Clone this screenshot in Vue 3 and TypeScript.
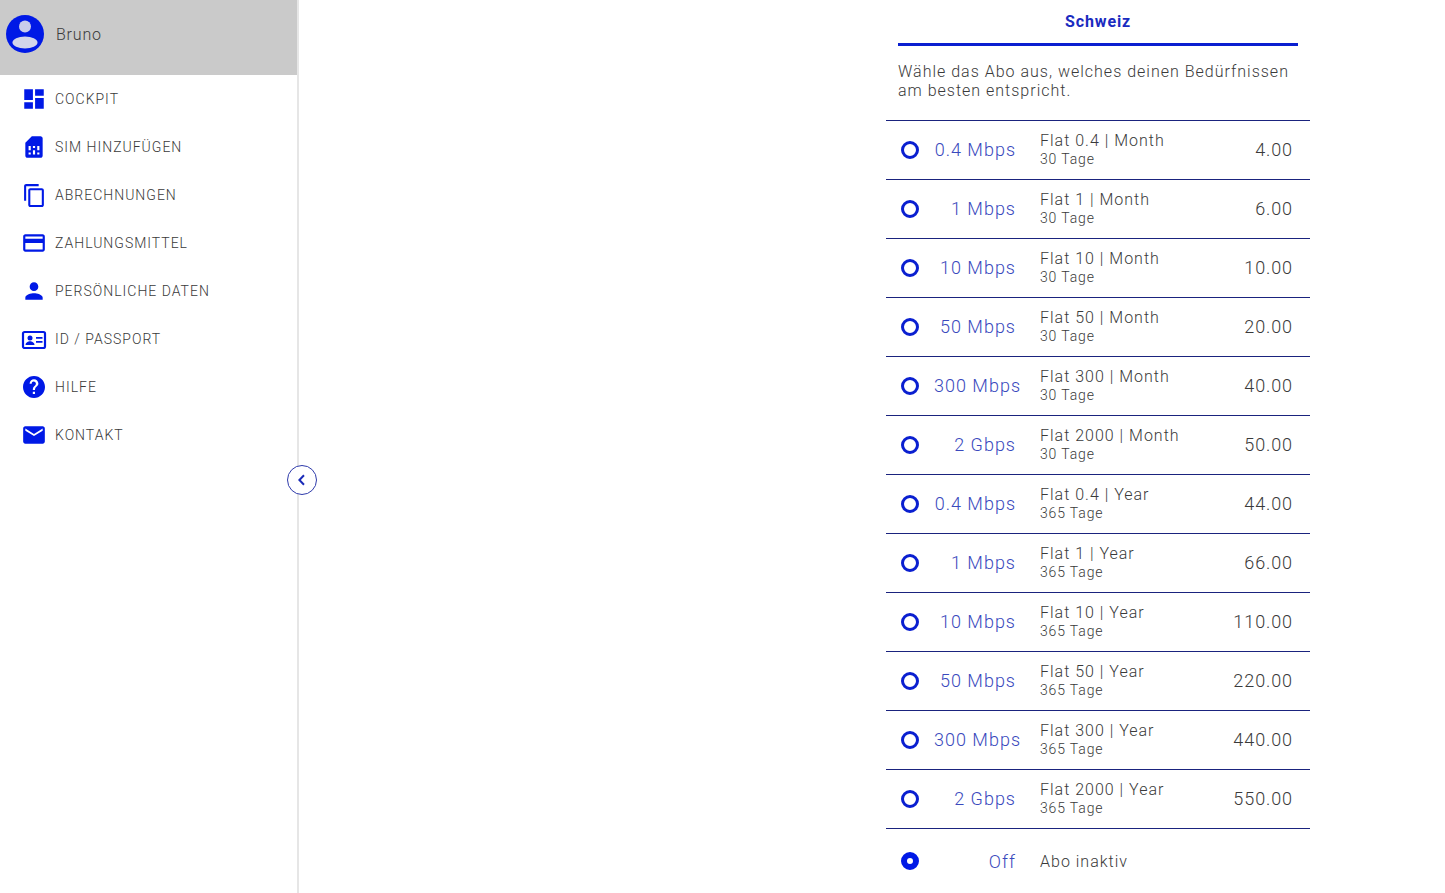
<script setup lang="ts">
interface Plan {
  speed: string
  name: string
  days: string
  price: string
}

const navItems = [
  { label: 'Cockpit', icon: 'dashboard' },
  { label: 'SIM hinzufügen', icon: 'sim' },
  { label: 'Abrechnungen', icon: 'copy' },
  { label: 'Zahlungsmittel', icon: 'card' },
  { label: 'Persönliche Daten', icon: 'person' },
  { label: 'ID / Passport', icon: 'id' },
  { label: 'Hilfe', icon: 'help' },
  { label: 'Kontakt', icon: 'mail' },
]

const tiers = [
  ['0.4 Mbps', '0.4'],
  ['1 Mbps', '1'],
  ['10 Mbps', '10'],
  ['50 Mbps', '50'],
  ['300 Mbps', '300'],
  ['2 Gbps', '2000'],
]
const monthPrices = ['4.00', '6.00', '10.00', '20.00', '40.00', '50.00']
const yearPrices = ['44.00', '66.00', '110.00', '220.00', '440.00', '550.00']

const plans: Plan[] = [
  ...tiers.map(([speed, flat], i) => ({
    speed,
    name: `Flat ${flat} | Month`,
    days: '30 Tage',
    price: monthPrices[i],
  })),
  ...tiers.map(([speed, flat], i) => ({
    speed,
    name: `Flat ${flat} | Year`,
    days: '365 Tage',
    price: yearPrices[i],
  })),
]
</script>

<template>
  <div class="page">
    <aside class="sidebar">
      <div class="user">
        <svg class="avatar" viewBox="0 0 40 40">
          <circle cx="20" cy="20" r="19" fill="#0019e6" />
          <circle cx="20" cy="12.500" r="6" fill="#c9cceb" />
          <ellipse cx="20" cy="28.500" rx="12.500" ry="6" fill="#d3d5ea" />
        </svg>
        <span class="user__name">Bruno</span>
      </div>
      <nav class="nav">
        <a v-for="item in navItems" :key="item.label" class="nav__item">
          <span class="nav__icon">
            <svg v-if="item.icon === 'dashboard'" width="26" height="26" viewBox="0 0 24 24">
              <path d="M3 13h8V3H3v10zm0 8h8v-6H3v6zm10 0h8V11h-8v10zm0-18v6h8V3h-8z" />
            </svg>
            <svg v-else-if="item.icon === 'sim'" width="26" height="26" viewBox="0 0 24 24">
              <path d="M19.99 4c0-1.1-.89-2-1.99-2h-8L4 8v12c0 1.1.9 2 2 2h12c1.1 0 2-.9 2-2l-.01-16zM9 19H7v-2h2v2zm8 0h-2v-2h2v2zm-8-4H7v-4h2v4zm4 4h-2v-4h2v4zm0-6h-2v-2h2v2zm4 2h-2v-4h2v4z" />
            </svg>
            <svg v-else-if="item.icon === 'copy'" width="25" height="25" viewBox="0 0 24 24">
              <path d="M16 1H4c-1.1 0-2 .9-2 2v14h2V3h12V1zm3 4H8c-1.1 0-2 .9-2 2v14c0 1.1.9 2 2 2h11c1.1 0 2-.9 2-2V7c0-1.1-.9-2-2-2zm0 16H8V7h11v14z" />
            </svg>
            <svg v-else-if="item.icon === 'card'" width="26" height="26" viewBox="0 0 24 24">
              <path d="M20 4H4c-1.11 0-1.99.89-1.99 2L2 18c0 1.11.89 2 2 2h16c1.11 0 2-.89 2-2V6c0-1.11-.89-2-2-2zm0 14H4v-6h16v6zm0-10H4V6h16v2z" />
            </svg>
            <svg v-else-if="item.icon === 'person'" width="26" height="26" viewBox="0 0 24 24">
              <path d="M12 12c2.21 0 4-1.79 4-4s-1.79-4-4-4-4 1.79-4 4 1.79 4 4 4zm0 2c-2.67 0-8 1.34-8 4v2h16v-2c0-2.66-5.33-4-8-4z" />
            </svg>
            <svg v-else-if="item.icon === 'id'" width="26" height="20" viewBox="0 -1 26 20">
              <rect x="2" y="2" width="22" height="16" rx="1.500" fill="none" stroke="#0019e6" stroke-width="2.200" />
              <circle cx="9" cy="8" r="2.500" />
              <path d="M4.500 15c0-2.600 2.800-3.800 4.500-3.800s4.500 1.200 4.500 3.800z" />
              <path d="M15 7h6.500v1.800H15zM15 11h6.500v1.800H15z" />
            </svg>
            <svg v-else-if="item.icon === 'help'" width="24" height="24" viewBox="0 0 24 24">
              <path d="M12 1C5.930 1 1 5.930 1 12s4.930 11 11 11 11-4.930 11-11S18.070 1 12 1zm1 18h-2.200v-2.200H13V19zm2.200-7.900l-1 1c-.8.800-1.200 1.400-1.200 2.900h-2.200v-.5c0-1.100.4-2.100 1.200-2.900l1.300-1.300c.4-.4.600-.9.600-1.500 0-1.200-1-2.200-2.200-2.200S9.700 7.500 9.700 8.700H7.600C7.600 6.300 9.600 4.300 12 4.300s4.400 2 4.400 4.400c0 1-.4 1.800-1.200 2.400z" />
            </svg>
            <svg v-else width="26" height="26" viewBox="0 0 24 24">
              <path d="M20 4H4c-1.100 0-2 .9-2 2v12c0 1.100.9 2 2 2h16c1.100 0 2-.9 2-2V6c0-1.100-.9-2-2-2zm0 4l-8 5-8-5V6l8 5 8-5v2z" />
            </svg>
          </span>
          <span class="nav__label">{{ item.label }}</span>
        </a>
      </nav>
      <button class="collapse" type="button" aria-label="Menü einklappen">
        <svg width="14" height="14" viewBox="0 0 14 14">
          <path d="M9 2.300 4.400 7 9 11.700" fill="none" stroke="#1a2bb8" stroke-width="2" />
        </svg>
      </button>
    </aside>

    <main class="main">
      <section class="subscription">
        <div class="tab">Schweiz</div>
        <p class="intro">Wähle das Abo aus, welches deinen Bedürfnissen am besten entspricht.</p>
        <div class="plans">
          <label v-for="plan in plans" :key="plan.name" class="plan">
            <span class="radio"></span>
            <span class="plan__speed">{{ plan.speed }}</span>
            <span class="plan__info">
              <span class="plan__name">{{ plan.name }}</span>
              <span class="plan__days">{{ plan.days }}</span>
            </span>
            <span class="plan__price">{{ plan.price }}</span>
          </label>
          <label class="plan plan--off">
            <span class="radio radio--checked"></span>
            <span class="plan__speed">Off</span>
            <span class="plan__info plan__info--off">
              <span class="plan__name">Abo inaktiv</span>
            </span>
          </label>
        </div>
      </section>
    </main>
  </div>
</template>

<style>
html,
body {
  margin: 0;
  background: #fff;
}
</style>

<style scoped>
.page {
  display: flex;
  height: 893px;
  overflow: hidden;
  font-family: Roboto, "Liberation Sans", sans-serif;
  font-weight: 300;
  color: #3a3a3a;
}

.sidebar {
  position: relative;
  flex: none;
  width: 297px;
  border-right: 2px solid #e6e6e6;
}

.user {
  display: flex;
  align-items: center;
  gap: 11px;
  height: 75px;
  padding: 0 0 7px 5px;
  box-sizing: border-box;
  background: #cacaca;
}

.avatar {
  width: 40px;
  height: 40px;
}

.user__name {
  font-size: 16px;
  letter-spacing: 0.8px;
}

.nav__item {
  display: flex;
  align-items: center;
  height: 48px;
}

.nav__icon {
  display: flex;
  justify-content: center;
  width: 26px;
  margin-left: 21px;
  margin-right: 8px;
  fill: #0019e6;
}

.nav__label {
  font-size: 14px;
  letter-spacing: 1px;
  text-transform: uppercase;
}

.collapse {
  position: absolute;
  top: 465px;
  left: 287px;
  display: flex;
  align-items: center;
  justify-content: center;
  width: 30px;
  height: 30px;
  padding: 0;
  border: 1.5px solid #2f3bab;
  border-radius: 50%;
  background: #fff;
}

.main {
  flex: 1;
  padding-left: 587px;
}

.subscription {
  width: 424px;
}

.tab {
  width: 400px;
  height: 46px;
  margin: 0 auto;
  box-sizing: border-box;
  border-bottom: 3px solid #0a1fd0;
  padding-top: 12px;
  text-align: center;
  font-size: 16px;
  line-height: 19px;
  font-weight: 700;
  letter-spacing: 0.9px;
  color: #1a2bc0;
}

.intro {
  margin: 16px 12px 20px;
  font-size: 16px;
  line-height: 19px;
  letter-spacing: 1px;
}

.plans {
  border-top: 1px solid #1a237e;
}

.plan {
  display: flex;
  align-items: center;
  height: 59px;
  padding-bottom: 2px;
  box-sizing: border-box;
  border-bottom: 1px solid #1a237e;
}

.plan--off {
  height: 64px;
  padding-bottom: 0;
  border-bottom: 0;
}

.radio {
  flex: none;
  width: 18px;
  height: 18px;
  margin: 2px 0 0 15px;
  box-sizing: border-box;
  border: 3px solid #0a1fd0;
  border-radius: 50%;
}

.radio--checked {
  margin-top: 0;
  border-width: 6px;
  border-color: #0019e6;
}

.plan__speed {
  flex: none;
  width: 82px;
  margin-left: 15px;
  text-align: right;
  white-space: nowrap;
  font-size: 18px;
  letter-spacing: 1px;
  color: #3a49bd;
}

.plan__info {
  display: flex;
  flex-direction: column;
  flex: 1;
  margin-left: 24px;
}

.plan__info--off {
  padding-top: 2px;
}

.plan__name {
  font-size: 16px;
  line-height: 20px;
  letter-spacing: 1px;
}

.plan__days {
  font-size: 14px;
  line-height: 17px;
  letter-spacing: 0.85px;
}

.plan__price {
  margin-right: 17px;
  font-size: 18px;
  letter-spacing: 0.9px;
}
</style>
